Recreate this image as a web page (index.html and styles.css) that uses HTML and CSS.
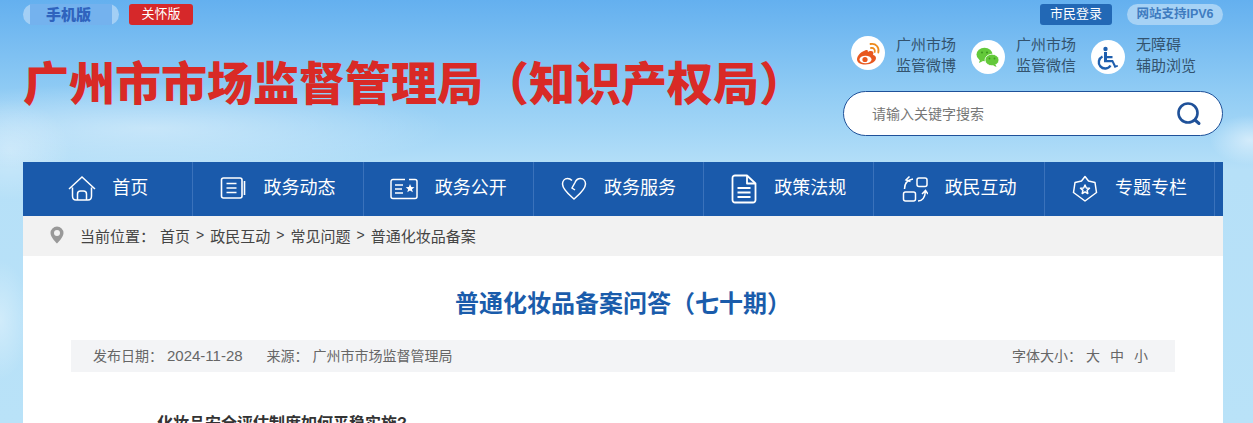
FILE: index.html
```html
<!DOCTYPE html>
<html lang="zh-CN">
<head>
    <meta charset="UTF-8">
    <meta name="viewport" content="width=device-width, initial-scale=1.0">
    <title>普通化妆品备案问答（七十期）</title>
    <link rel="stylesheet" href="styles.css">
</head>
<body>
    <div class="wrap">
        <header class="header">
            <div class="top-bar">
                <div class="top-left">
                    <a class="btn-mobile"><span>手机版</span></a>
                    <a class="btn-care">关怀版</a>
                </div>
                <div class="top-right">
                    <a class="btn-login">市民登录</a>
                    <a class="btn-ipv6">网站支持IPV6</a>
                </div>
            </div>
            <div class="head-main">
                <h1 class="site-title">广州市市场监督管理局（知识产权局）</h1>
                <div class="head-tools">
                    <div class="services">
                        <a class="service service-raised">
                            <span class="service-icon">
                                <svg width="34" height="34" viewBox="0 0 34 34">
                                    <path d="M14 14.500c-4.500 1.500-8 5.500-8 9 0 3 3.500 5 8.500 5 6 0 10.500-3 10.500-6.500 0-2-2-2.800-3-3.200 1-2.300 0-3.800-2-3.800-1.500 0-2.500.5-3.200 1 .5-1.500-.3-2.500-2.800-1.500z" fill="#e8581f"/>
                                    <ellipse cx="14.500" cy="23.500" rx="6" ry="3.800" fill="#fff"/>
                                    <circle cx="14" cy="23.500" r="2.600" fill="#e8581f"/>
                                    <path d="M19.500 8c5.500-1 9 3.500 7.800 8.500M20 12c2.800-.5 4.300 1.800 3.700 4" fill="none" stroke="#ee8a1c" stroke-width="1.800" stroke-linecap="round"/>
                                </svg>
                            </span>
                            <span class="service-text">广州市场<br>监管微博</span>
                        </a>
                        <a class="service">
                            <span class="service-icon">
                                <svg width="34" height="34" viewBox="0 0 34 34">
                                    <ellipse cx="13.500" cy="14.500" rx="8" ry="6.800" fill="#63c93a"/>
                                    <path d="M9 19.500l-1 3.500 4-2z" fill="#63c93a"/>
                                    <ellipse cx="21" cy="20" rx="7" ry="5.800" fill="#63c93a" stroke="#fff" stroke-width=".8"/>
                                    <path d="M24.500 24.500l1 2.500-3.500-1.500z" fill="#63c93a"/>
                                    <circle cx="11" cy="12.500" r="1.100" fill="#3f9a22"/>
                                    <circle cx="16" cy="12.500" r="1.100" fill="#3f9a22"/>
                                    <circle cx="18.500" cy="18.500" r=".9" fill="#3f9a22"/>
                                    <circle cx="23.500" cy="18.500" r=".9" fill="#3f9a22"/>
                                </svg>
                            </span>
                            <span class="service-text">广州市场<br>监管微信</span>
                        </a>
                        <a class="service">
                            <span class="service-icon">
                                <svg width="34" height="34" viewBox="0 0 34 34">
                                    <circle cx="14.500" cy="9" r="2.200" fill="#1f5fae"/>
                                    <path d="M13 12h3v4h5.500v2.200H16V20h6l2.800 5.500 1.700-.6.600 1.700-3.500 1.300-2.700-5.700H13z" fill="#1f5fae"/>
                                    <path d="M11.500 16.500a6.300 6.300 0 1 0 8 9" fill="none" stroke="#1f5fae" stroke-width="2.400"/>
                                </svg>
                            </span>
                            <span class="service-text">无障碍<br>辅助浏览</span>
                        </a>
                    </div>
                    <div class="search">
                        <span class="search-text">请输入关键字搜索</span>
                        <svg class="search-icon" width="26" height="26" viewBox="0 0 26 26">
                            <circle cx="12" cy="12" r="9.500" fill="none" stroke="#1f5199" stroke-width="2.600"/>
                            <path d="M19 19l4 3.500" stroke="#1f5199" stroke-width="3" stroke-linecap="round"/>
                        </svg>
                    </div>
                </div>
            </div>
        </header>

        <nav class="nav">
            <a class="nav-item nav-home">
                <svg width="30" height="28" viewBox="0 0 30 28" fill="none" stroke="#fff" stroke-width="1.500">
                    <path d="M2 14L15 2l13 12M5.500 12.500V21c0 2.500 1 4 3.500 4h12c2.500 0 3.500-1.500 3.500-4v-8.500"/>
                    <path d="M10.500 25v-6c0-2 1-3 3-3h3c2 0 3 1 3 3v6"/>
                </svg>
                <span>首页</span>
            </a>
            <a class="nav-item">
                <svg width="26" height="26" viewBox="0 0 26 26" fill="none" stroke="#fff" stroke-width="1.600">
                    <rect x="1.500" y="2" width="20.500" height="20" rx="2"/>
                    <path d="M24.500 5v14M6.500 7.500h10M6.500 12h10M6.500 16.500h10"/>
                </svg>
                <span>政务动态</span>
            </a>
            <a class="nav-item">
                <svg width="28" height="22" viewBox="0 0 28 22" fill="none" stroke="#fff" stroke-width="1.500">
                    <path d="M15 1.500H3a2 2 0 0 0-2 2v15a2 2 0 0 0 2 2h22a2 2 0 0 0 2-2v-15a2 2 0 0 0-2-2h-6"/>
                    <path d="M5 7h8M5 11h7M5 15h8"/>
                    <path d="M20 6l1.300 3 3.200.2-2.500 2 .9 3.100-2.900-1.700-2.700 1.700.8-3.100-2.400-2 3.100-.2z" fill="#fff" stroke="none"/>
                </svg>
                <span>政务公开</span>
            </a>
            <a class="nav-item">
                <svg width="26" height="24" viewBox="0 0 26 24" fill="none" stroke="#fff" stroke-width="1.500">
                    <path d="M11 3.500C9.500 2 8 1.500 6.500 1.500 3.500 1.500 1.500 4 1.500 7c0 5.500 7 11 11.500 15 4.500-4 11.500-9.500 11.500-15 0-3-2-5.500-5-5.500-2.500 0-4.500 1.500-5.500 4l-3 5.500 3 2"/>
                </svg>
                <span>政务服务</span>
            </a>
            <a class="nav-item">
                <svg width="26" height="30" viewBox="0 0 26 30" fill="none" stroke="#fff" stroke-width="1.800" stroke-linejoin="round">
                    <path d="M16 1.500H4a2.500 2.500 0 0 0-2.500 2.500v22A2.500 2.500 0 0 0 4 28.500h18a2.500 2.500 0 0 0 2.500-2.500V9.500z"/>
                    <path d="M16 2v7.500h8M6.500 14h13M6.500 18.500h13M6.500 23h13"/>
                </svg>
                <span>政策法规</span>
            </a>
            <a class="nav-item">
                <svg width="26" height="26" viewBox="0 0 26 26" fill="none" stroke="#fff" stroke-width="1.500">
                    <rect x="15" y="2" width="10" height="8.500" rx="2"/>
                    <rect x="1.500" y="16" width="12" height="9" rx="2"/>
                    <path d="M2.500 13C2.500 8 5 4 11 3M7.500 .5L4 4l4.500 1.500"/>
                    <path d="M16 25c5 0 7-4 7.500-10M20 18l3.500-3.500 2.500 3.500"/>
                </svg>
                <span>政民互动</span>
            </a>
            <a class="nav-item">
                <svg width="26" height="28" viewBox="0 0 26 28" fill="none" stroke="#fff" stroke-width="1.500" stroke-linejoin="round">
                    <path d="M13 1.500l3.500 4.500 6.500 1.500 1.500 10-11.500 8.500L1.500 17.500 3 7.500 9.500 6z"/>
                    <path d="M13 10l1.300 3 3.200.3-2.400 2.100.7 3.100-2.800-1.600-2.800 1.600.7-3.100-2.400-2.100 3.200-.3z"/>
                </svg>
                <span>专题专栏</span>
            </a>
        </nav>

        <div class="crumb">
            <svg class="crumb-pin" width="14" height="18" viewBox="0 0 14 18">
                <path d="M7 0.500a6.500 6.500 0 0 0-6.500 6.500C.5 11.500 7 17.500 7 17.500S13.500 11.500 13.500 7A6.500 6.500 0 0 0 7 .5z" fill="#999"/>
                <circle cx="7" cy="7" r="3" fill="#f2f2f2"/>
            </svg>
            <span class="crumb-label">当前位置：</span>
            <a>首页</a><i>&gt;</i><a>政民互动</a><i>&gt;</i><a>常见问题</a><i>&gt;</i><a>普通化妆品备案</a>
        </div>

        <main class="article">
            <h2 class="article-title">普通化妆品备案问答（七十期）</h2>
            <div class="meta">
                <div class="meta-left">
                    <span>发布日期：<em class="meta-date">2024-11-28</em></span>
                    <span>来源：<em>广州市市场监督管理局</em></span>
                </div>
                <div class="meta-right">字体大小：<a>大</a><a>中</a><a>小</a></div>
            </div>
            <p class="question">化妆品安全评估制度如何平稳实施?</p>
        </main>
    </div>
</body>
</html>
```

FILE: styles.css
```css
* {
    box-sizing: border-box;
}

html,
body {
    margin: 0;
    height: 423px;
    overflow: hidden;
}

body {
    font-family: "Liberation Sans", "Noto Sans CJK SC", sans-serif;
    color: #333;
    background:
        radial-gradient(ellipse 300px 45px at 150px 128px, rgba(255,255,255,0.4), transparent),
        radial-gradient(ellipse 60px 50px at 10px 150px, rgba(255,255,255,0.3), transparent),
        radial-gradient(ellipse 40px 25px at 1250px 140px, rgba(255,255,255,0.5), transparent),
        radial-gradient(ellipse 30px 60px at 0 320px, rgba(255,255,255,0.35), transparent),
        linear-gradient(#64b0ef 0, #8fcbf4 90px, #b6e0f8 170px, #b9e2f8 100%);
}

a {
    color: inherit;
    text-decoration: none;
}

.wrap {
    width: 1200px;
    margin-left: 23px;
}

/* 顶部 */
.header {
    height: 162px;
}

.top-bar {
    display: flex;
    justify-content: space-between;
    padding-top: 4px;
}

.top-left,
.top-right {
    display: flex;
    align-items: center;
}

.btn-mobile {
    width: 96px;
    height: 21px;
    padding: 0 7px;
    border-radius: 11px;
    background: #a3cff5;
}

.btn-mobile span {
    display: block;
    height: 21px;
    line-height: 20px;
    padding-right: 5px;
    text-align: center;
    font-family: "Noto Sans CJK SC", sans-serif;
    font-size: 15px;
    font-weight: 900;
    color: #2f63bd;
    background: #74b2ee;
}

.btn-care {
    width: 64px;
    height: 21px;
    margin-left: 10px;
    line-height: 20px;
    text-align: center;
    font-size: 13px;
    color: #fff;
    background: #d6282a;
    border-radius: 3px;
}

.btn-login {
    width: 72px;
    height: 21px;
    line-height: 20px;
    text-align: center;
    font-size: 13px;
    color: #fff;
    background: #2268b5;
    border-radius: 3px;
}

.btn-ipv6 {
    width: 96px;
    height: 21px;
    margin-left: 15px;
    line-height: 20px;
    text-align: center;
    font-size: 12.5px;
    font-weight: 700;
    color: #3f7cc0;
    background: #a6d2f5;
    border-radius: 11px;
}

.head-main {
    display: flex;
    justify-content: space-between;
}

.site-title {
    margin: 20px 0 0;
    white-space: nowrap;
    font-family: "Noto Sans CJK SC", sans-serif;
    font-size: 46px;
    line-height: 70px;
    font-weight: 900;
    color: #d92a26;
}

.head-tools {
    width: 380px;
    padding-top: 9px;
}

.services {
    display: flex;
    padding-left: 8px;
}

.service {
    display: flex;
    align-items: center;
    width: 120px;
}

.service-icon {
    flex: none;
    display: flex;
    align-items: center;
    justify-content: center;
    width: 34px;
    height: 34px;
    margin-top: 4px;
    background: #fff;
    border-radius: 50%;
}

.service-raised .service-icon {
    margin-top: -4px;
}

.service-text {
    margin-left: 11px;
    font-size: 15px;
    line-height: 21px;
    color: #33536e;
}

.search {
    display: flex;
    align-items: center;
    justify-content: space-between;
    height: 45px;
    margin-top: 15px;
    padding: 0 20px 0 28px;
    background: #fff;
    border: 1px solid #1f5199;
    border-radius: 23px;
}

.search-text {
    padding-bottom: 2px;
    font-size: 14px;
    color: #777;
}

/* 导航 */
.nav {
    display: flex;
    height: 54px;
    background: #1a5aab;
}

.nav-item {
    display: flex;
    align-items: center;
    justify-content: center;
    gap: 17px;
    width: 170.3px;
    border-right: 1px solid #3a72bb;
    font-size: 18px;
    color: #fff;
}

.nav-item span {
    padding-bottom: 7px;
}

.nav-home {
    gap: 15px;
}

/* 当前位置 */
.crumb {
    display: flex;
    align-items: center;
    height: 40px;
    padding: 0 0 2px 27px;
    font-size: 15px;
    color: #444;
    background: #f2f2f2;
}

.crumb-pin {
    margin-right: 16px;
}

.crumb-label {
    margin-right: 5px;
}

.crumb i {
    margin: 0 6px;
    font-size: 14px;
    font-style: normal;
}

/* 正文 */
.article {
    height: 167px;
    padding: 0 48px;
    background: #fff;
}

.article-title {
    margin: 0;
    padding-top: 30px;
    text-align: center;
    font-size: 24px;
    line-height: 36px;
    font-weight: 700;
    color: #1a5cab;
}

.meta {
    display: flex;
    justify-content: space-between;
    align-items: center;
    height: 32px;
    margin-top: 18px;
    padding: 0 27px 2px 22px;
    font-size: 14px;
    color: #666;
    background: #f3f4f6;
}

.meta-left span {
    margin-right: 20px;
}

.meta em {
    font-style: normal;
    margin-left: 4px;
}

.meta-date {
    font-size: 15px;
}

.meta-right a {
    margin-left: 10px;
}

.meta-right a:first-child {
    margin-left: 4px;
}

.question {
    margin: 40px 0 0 86px;
    font-size: 16px;
    line-height: 24px;
    font-weight: 700;
    color: #333;
}
```
